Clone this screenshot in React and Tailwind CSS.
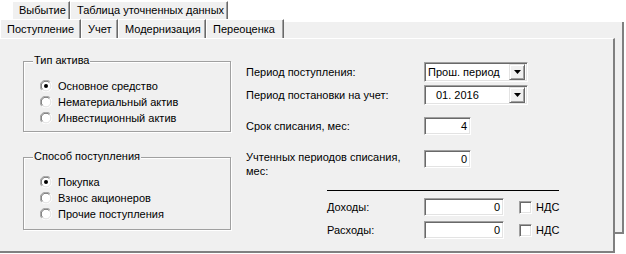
import React from 'react';

const sunken =
  'bg-white border border-t-[#a0a0a0] border-l-[#a0a0a0] border-r-white border-b-white shadow-[inset_1px_1px_0_#696969,inset_-1px_-1px_0_#e3e3e3]';

const Radio = ({ checked, label }) => (
  <div className="flex items-center h-[16px] gap-[6px]">
    <svg width="12" height="12" viewBox="0 0 12 12">
      <circle cx="6" cy="6" r="5" fill="white" />
      <path d="M1.8 10.2 A5.9 5.9 0 0 1 10.2 1.8" stroke="#a0a0a0" strokeWidth="1" fill="none" />
      <path d="M10.2 1.8 A5.9 5.9 0 0 1 1.8 10.2" stroke="#ffffff" strokeWidth="1" fill="none" />
      <path d="M2.6 9.4 A4.8 4.8 0 0 1 9.4 2.6" stroke="#696969" strokeWidth="1" fill="none" />
      <path d="M9.4 2.6 A4.8 4.8 0 0 1 2.6 9.4" stroke="#e3e3e3" strokeWidth="1" fill="none" />
      {checked && <circle cx="6" cy="6" r="2" fill="black" />}
    </svg>
    <span>{label}</span>
  </div>
);

const Group = ({ title, items, h }) => (
  <div className={`relative border border-[#a0a0a0] shadow-[inset_1px_1px_0_white,1px_1px_0_white] ${h}`}>
    <span className="absolute -top-[8px] left-[9px] px-[1px] bg-[#f0f0f0] leading-[13px]">{title}</span>
    <div className="pt-[16px] pl-[16px]">
      {items.map((it, i) => (
        <Radio key={it} label={it} checked={i === 0} />
      ))}
    </div>
  </div>
);

const Combo = ({ value, indent }) => (
  <div className={`${sunken} w-[104px] h-[20px] flex items-center p-[2px]`}>
    <span className={`flex-1 ${indent ? 'pl-[9px]' : 'pl-[1px]'}`}>{value}</span>
    <div className="w-[16px] h-[16px] bg-[#f0f0f0] border border-t-[#e3e3e3] border-l-[#e3e3e3] border-r-[#696969] border-b-[#696969] shadow-[inset_1px_1px_0_white,inset_-1px_-1px_0_#a0a0a0] flex items-center justify-center">
      <svg width="7" height="4" viewBox="0 0 7 4">
        <path d="M0 0 H7 L3.5 4 Z" fill="black" />
      </svg>
    </div>
  </div>
);

const Edit = ({ value, w }) => (
  <div className={`${sunken} ${w} h-[18px] flex items-center justify-end pr-[3px]`}>{value}</div>
);

const Check = () => (
  <div className={`${sunken} w-[13px] h-[13px]`} />
);

const Tab = ({ label, w }) => (
  <div className={`${w} h-full bg-[#f0f0f0] border-t border-l border-white border-r border-r-[#696969] shadow-[inset_-1px_0_0_#a0a0a0] flex items-center pl-[6px]`}>
    {label}
  </div>
);

export default function App() {
  return (
    <div className="w-[626px] h-[254px] bg-white overflow-hidden text-[11px] text-black font-['Liberation_Sans',Arial,sans-serif] leading-[13px]">
      <div className="flex h-[19px] pl-[12px] pt-[1px]">
        <Tab label="Выбытие" w="w-[58px]" />
        <Tab label="Таблица уточненных данных" w="w-[158px]" />
      </div>
      <div className="flex h-[19px] w-[624px]">
        <Tab label="Поступление" w="w-[81px]" />
        <Tab label="Учет" w="w-[37px]" />
        <Tab label="Модернизация" w="w-[88px]" />
        <Tab label="Переоценка" w="w-[78px]" />
        <div className="flex-1 mt-[3px] bg-[#f0f0f0] border-r-2 border-r-[#808080]" />
      </div>
      <div className="flex w-[624px]">
        <div className="w-[615px] h-[215px] bg-[#f0f0f0] border-t border-t-white border-r-2 border-r-[#808080] border-b-2 border-b-[#808080] flex pl-[23px]">
          <div className="w-[208px] pt-[22px] flex flex-col gap-[25px]">
            <Group
              title="Тип актива"
              h="h-[71px]"
              items={['Основное средство', 'Нематериальный актив', 'Инвестиционный актив']}
            />
            <Group
              title="Способ поступления"
              h="h-[73px]"
              items={['Покупка', 'Взнос акционеров', 'Прочие поступления']}
            />
          </div>
          <div className="ml-[15px] pt-[23px] flex flex-col">
            <div className="flex items-center h-[20px]">
              <span className="w-[178px]">Период поступления:</span>
              <Combo value="Прош. период" />
            </div>
            <div className="flex items-center h-[20px] mt-[3px]">
              <span className="w-[178px]">Период постановки на учет:</span>
              <Combo value="01. 2016" indent />
            </div>
            <div className="flex items-center h-[18px] mt-[12px]">
              <span className="w-[178px]">Срок списания, мес:</span>
              <Edit value="4" w="w-[47px]" />
            </div>
            <div className="flex items-start h-[18px] mt-[15px]">
              <span className="w-[178px] leading-[14px]">Учтенных периодов списания,<br />мес:</span>
              <Edit value="0" w="w-[47px]" />
            </div>
            <div className="ml-[81px] mt-[22px] w-[232px] h-[1px] bg-black" />
            <div className="flex items-center h-[18px] mt-[7px] pl-[81px]">
              <span className="w-[97px]">Доходы:</span>
              <Edit value="0" w="w-[80px]" />
              <div className="ml-[15px]"><Check /></div>
              <span className="ml-[4px]">НДС</span>
            </div>
            <div className="flex items-center h-[18px] mt-[5px] pl-[81px]">
              <span className="w-[97px]">Расходы:</span>
              <Edit value="0" w="w-[80px]" />
              <div className="ml-[15px]"><Check /></div>
              <span className="ml-[4px]">НДС</span>
            </div>
          </div>
        </div>
        <div className="w-[9px] h-[196px] bg-[#f0f0f0] border-r-2 border-r-[#808080] border-b-2 border-b-[#808080]" />
      </div>
    </div>
  );
}
